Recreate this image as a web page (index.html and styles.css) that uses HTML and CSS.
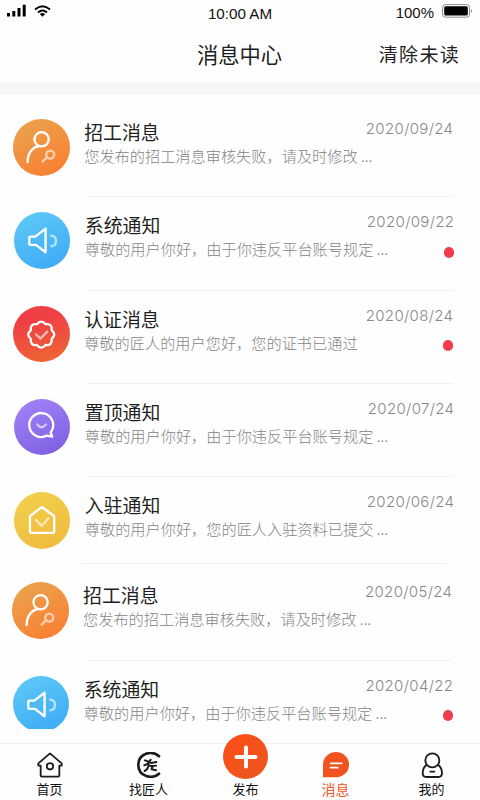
FILE: index.html
```html
<!DOCTYPE html>
<html lang="zh-CN">
<head>
<meta charset="utf-8">
<title>消息中心</title>
<link rel="stylesheet" href="styles.css">
</head>
<body>
<svg class="defs" width="0" height="0">
  <symbol id="i-person" viewBox="0 0 170 170"><circle cx="86" cy="61" r="21.5"/><path d="M44 130C44 103 58 85 77 82"/><g class="dim"><circle cx="112" cy="107" r="12"/><path d="M103 115L89 128"/></g></symbol>
  <symbol id="i-speaker" viewBox="0 0 170 170"><path d="M50 74H64L95 50V121L66 99H50Q46 99 46 94V79Q46 74 50 74Z"/><path class="dim" d="M112 71C131 73 131 101 112 103"/></symbol>
  <symbol id="i-badge" viewBox="0 0 170 170"><path d="M116.400 73Q132 86 116.400 99Q119 120 98 117.400Q85 133 72 117.400Q51 120 53.600 99Q38 86 53.600 73Q51 52 72 54.600Q85 39 98 54.600Q119 52 116.400 73Z"/><path class="dim" d="M69 85L83 98L103 77"/></symbol>
  <symbol id="i-chat" viewBox="0 0 170 170"><path d="M99 110A36 36 0 1 1 112 98L110 101L115 113Z"/><path class="dim" d="M70 77Q83 93 96 77"/></symbol>
  <symbol id="i-house" viewBox="0 0 170 170"><path d="M48 73L80 48Q84 45 88 48L121 73V118Q121 123 116 123H53Q48 123 48 118Z"/><path class="dim" d="M66 84L83 102L104 79"/></symbol>
</svg>
<div class="screen">
  <div class="status">
    <div class="signals">
      <svg width="19" height="13" viewBox="0 0 19 13"><path d="M0 9h3v3.500H0zM5.300 7h3v5.500h-3zM10.500 4h3v8.500h-3zM15.700 .700h3v11.800h-3z"/></svg>
      <svg class="wifi" width="17" height="12" viewBox="0 0 17 12"><path d="M1 4.500Q8.500-2 16 4.500M4 7.500Q8.500 3.500 13 7.500"/><path class="solid" d="M5.800 9Q8.500 7 11.200 9L8.500 11.700Z"/></svg>
    </div>
    <div class="time">10:00 AM</div>
    <div class="power"><span>100%</span>
      <svg width="31" height="14" viewBox="0 0 31 14"><rect class="case" x=".6" y=".6" width="27" height="12.600" rx="3"/><rect x="2.200" y="2.300" width="23.600" height="9.200" rx="1.500"/><path class="tip" d="M29 5q2 2 0 4z"/></svg>
    </div>
  </div>
  <header><span></span><h1>消息中心</h1><span class="clear">清除未读</span></header>
  <div class="band"></div>
  <main>
    <section class="row r1"><div class="item"><svg class="avatar orange"><use href="#i-person"/></svg><div class="text"><div class="top"><h2>招工消息</h2><time>2020/09/24</time></div><div class="bottom"><p>您发布的招工消息审核失败，请及时修改 ...</p></div></div></div></section>
    <section class="row r2"><div class="item"><svg class="avatar blue"><use href="#i-speaker"/></svg><div class="text"><div class="top"><h2>系统通知</h2><time>2020/09/22</time></div><div class="bottom"><p>尊敬的用户你好，由于你违反平台账号规定 ...</p><i></i></div></div></div></section>
    <section class="row r3"><div class="item"><svg class="avatar red"><use href="#i-badge"/></svg><div class="text"><div class="top"><h2>认证消息</h2><time>2020/08/24</time></div><div class="bottom"><p>尊敬的匠人的用户您好，您的证书已通过</p><i></i></div></div></div></section>
    <section class="row r4"><div class="item"><svg class="avatar purple"><use href="#i-chat"/></svg><div class="text"><div class="top"><h2>置顶通知</h2><time>2020/07/24</time></div><div class="bottom"><p>尊敬的用户你好，由于你违反平台账号规定 ...</p></div></div></div></section>
    <section class="row r5"><div class="item"><svg class="avatar yellow"><use href="#i-house"/></svg><div class="text"><div class="top"><h2>入驻通知</h2><time>2020/06/24</time></div><div class="bottom"><p>尊敬的用户你好，您的匠人入驻资料已提交 ...</p></div></div></div></section>
    <section class="row r6"><div class="item"><svg class="avatar orange"><use href="#i-person"/></svg><div class="text"><div class="top"><h2>招工消息</h2><time>2020/05/24</time></div><div class="bottom"><p>您发布的招工消息审核失败，请及时修改 ...</p></div></div></div></section>
    <section class="row r7"><div class="item"><svg class="avatar blue"><use href="#i-speaker"/></svg><div class="text"><div class="top"><h2>系统通知</h2><time>2020/04/22</time></div><div class="bottom"><p>尊敬的用户你好，由于你违反平台账号规定 ...</p><i></i></div></div></div></section>
  </main>
  <nav>
    <div class="tab"><svg width="26" height="26" viewBox="0 0 78 78"><path d="M39 4L4 34V41H11V70Q11 74 15 74H63Q67 74 67 70V41H74V34Z"/><circle cx="39" cy="43" r="9.500"/></svg><span>首页</span></div>
    <div class="tab"><svg width="26" height="26" viewBox="0 0 78 78"><path class="heavy" d="M69 13C48-7 7 4 7 39C7 74 49 83 69 65"/><path class="brush" d="M27 25L38 29M25 40Q38 37 44 23M38 34Q39 50 26 57M45 33L61 30M43 42Q54 43 60 41M52 43Q46 45 47 52L60 55"/></svg><span>找匠人</span></div>
    <div class="tab publish"><div class="fab"><svg width="24" height="24" viewBox="0 0 24 24"><path d="M12 2.500v19M2.500 12h19"/></svg></div><span>发布</span></div>
    <div class="tab active"><svg width="26" height="26" viewBox="0 0 78 78"><path class="bubble" d="M0 76V38A39 38 0 1 1 39 76Z"/><path class="lines" d="M23 34H56M23 47H44"/></svg><span>消息</span></div>
    <div class="tab"><svg width="26" height="26" viewBox="0 0 78 78"><circle cx="40" cy="25" r="21"/><path d="M22 39C16 44 11 54 11 63Q11 75 22 75H58Q69 75 69 63C69 54 64 44 58 39M34 59H46"/></svg><span>我的</span></div>
  </nav>
</div>
</body>
</html>
```
FILE: styles.css
```css
* { box-sizing: border-box; }
body { margin: 0; background: #fefefe; font-family: "Liberation Sans", "Noto Sans CJK SC", sans-serif; color: #1e1e1e; }
h1, h2, p { margin: 0; font-weight: 400; }
.defs { display: block; height: 0; }
.screen { width: 480px; height: 800px; display: flex; flex-direction: column; overflow: hidden; }

.status { height: 26px; display: grid; grid-template-columns: 1fr auto 1fr; padding: 4px 7px 0 7px; color: #111; }
.signals { display: flex; gap: 8px; }
.wifi { margin-top: 1px; fill: none; stroke: #000; stroke-width: 1.8; }
.wifi .solid { fill: #000; stroke: none; }
.time { font-size: 15.200px; line-height: 20px; }
.power { display: flex; justify-content: flex-end; gap: 8px; font-size: 15px; line-height: 17px; }
.power .case { fill: none; stroke: #888; }
.power .tip { fill: #888; }

header { height: 56px; display: grid; grid-template-columns: 1fr auto 1fr; align-items: center; padding-right: 21px; padding-left: 20px; }
h1 { font-family: "Noto Sans CJK SC", sans-serif; font-size: 21.300px; line-height: 30px; }
.clear { font-family: "Noto Sans CJK SC", sans-serif; justify-self: end; font-size: 19px; letter-spacing: 1.300px; line-height: 28px; margin-right: -1px; }
.band { height: 13px; background: #f6f6f9; }

main { height: 634px; flex: none; overflow: hidden; padding-top: 9px; }
.row { height: 93.300px; display: flex; flex-direction: column; padding: 15px 27px 0 13.200px; }
.row::after { content: ""; height: 1px; flex: none; margin: auto 0 0 74px; background: #f1f1f1; }
.r2, .r4, .r5 { padding-left: 13.800px; padding-right: 26px; }
.r5 { height: 87px; }
.r6 { height: 96.500px; padding-top: 18px; padding-left: 12px; padding-right: 28px; }
.r7 { padding-left: 12.700px; padding-right: 27px; }
.r5::after { margin-left: 67px; margin-right: 7px; }
.item { display: flex; gap: 14.500px; }
.avatar { width: 56.500px; height: 56.500px; flex: none; border-radius: 50%; fill: none; stroke: #fff; stroke-width: 7; stroke-linecap: round; stroke-linejoin: round; }
.dim { opacity: .6; }
.orange { background: linear-gradient(155deg, #e9a650, #fb7b2f); }
.blue { background: linear-gradient(155deg, #60cbf7, #3aa8f5); }
.red { background: linear-gradient(165deg, #ef4145 30%, #ed6a32); }
.purple { background: linear-gradient(155deg, #a485f8, #7b5ce0); }
.yellow { background: linear-gradient(155deg, #f2d24e, #efb83b); }
.text { flex: 1; min-width: 0; }
.top, .bottom { display: flex; justify-content: space-between; }
h2 { font-family: "Noto Sans CJK SC", sans-serif; font-size: 18.900px; line-height: 25px; white-space: nowrap; }
time { font-family: Inter, sans-serif; font-weight: 300; font-size: 15px; letter-spacing: .350px; line-height: 20px; margin-right: -.400px; color: #888; }
.bottom { align-items: center; }
p { font-family: "Noto Sans CJK SC", sans-serif; font-weight: 300; font-size: 15.200px; line-height: 23px; color: #858585; white-space: nowrap; }
.bottom i { width: 10.500px; height: 10.500px; border-radius: 50%; background: #f23b4b; margin-top: 7px; }

nav { flex: none; height: 57px; margin-top: 14px; border-top: 1px solid #efefef; display: grid; grid-template-columns: 99px 99px 95px 84px 109px; padding-right: 1px; }
.tab { display: flex; flex-direction: column; align-items: center; padding-top: 8px; font-size: 13px; line-height: 20px; color: #111; }
.tab > svg { fill: none; stroke: #1c1c1c; stroke-width: 5.5; stroke-linecap: round; stroke-linejoin: round; }
.tab > span { margin-top: 2px; }
.tab .heavy { stroke-width: 8; }
.tab .brush { stroke-width: 6; }
.publish { padding-top: 0; }
.fab { width: 45px; height: 45px; margin-top: -10px; border-radius: 50%; background: linear-gradient(145deg, #ff4d16, #e9571f); display: grid; place-items: center; }
.fab svg { stroke: #fff; stroke-width: 4; stroke-linecap: round; }
.publish > span { margin-top: 1px; }
.active { color: #ee5425; font-size: 14px; padding-left: 1px; }
.tab .bubble { fill: #f1521f; stroke: none; }
.tab .lines { stroke: #fff; }
```
